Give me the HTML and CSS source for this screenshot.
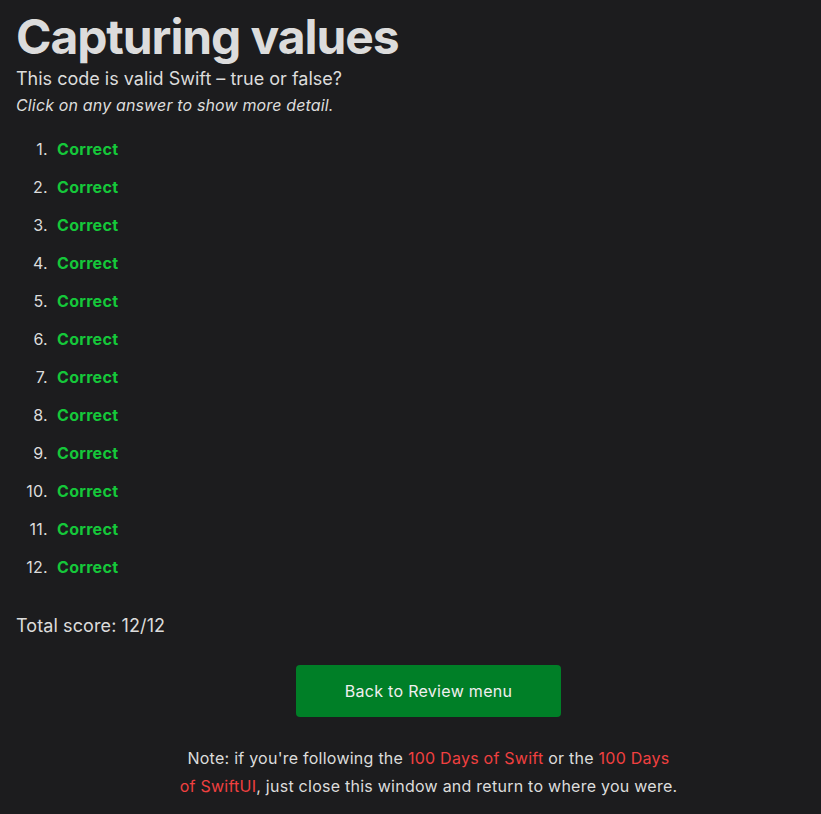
FILE: index.html
```html
<!DOCTYPE html>
<html>
<head>
<meta charset="utf-8">
<link rel="stylesheet" href="styles.css">
</head>
<body>
<main class="page">
  <h1 class="title">Capturing values</h1>
  <p class="subtitle">This code is valid Swift – true or false?</p>
  <p class="hint">Click on any answer to show more detail.</p>
  <ol class="answers">
    <li><span class="correct">Correct</span></li>
    <li><span class="correct">Correct</span></li>
    <li><span class="correct">Correct</span></li>
    <li><span class="correct">Correct</span></li>
    <li><span class="correct">Correct</span></li>
    <li><span class="correct">Correct</span></li>
    <li><span class="correct">Correct</span></li>
    <li><span class="correct">Correct</span></li>
    <li><span class="correct">Correct</span></li>
    <li><span class="correct">Correct</span></li>
    <li><span class="correct">Correct</span></li>
    <li><span class="correct">Correct</span></li>
  </ol>
  <p class="score">Total score: 12/12</p>
  <div class="actions">
    <a class="button" href="#">Back to Review menu</a>
    <p class="note">Note: if you're following the <a href="#">100 Days of Swift</a> or the <a href="#">100 Days of SwiftUI</a>, just close this window and return to where you were.</p>
  </div>
</main>
</body>
</html>
```
FILE: styles.css
```css
html, body {
  margin: 0;
  padding: 0;
  background: #1c1c1e;
}
body {
  font-family: Inter, "Noto Sans", sans-serif;
  color: #dcdcdc;
}
.page {
  padding: 8px 16px 0 16px;
}
.title {
  margin: 0;
  font-size: 48px;
  font-weight: 700;
  line-height: 58px;
  letter-spacing: -1.1px;
}
.subtitle {
  margin: 0;
  font-size: 18px;
  line-height: 26px;
}
.hint {
  margin: 2px 0 0 0;
  font-size: 16px;
  font-style: italic;
  line-height: 22px;
  letter-spacing: 0.15px;
}
.answers {
  margin: 22px 0 0 0;
  padding: 0;
  list-style: none;
  counter-reset: answer;
  font-size: 16px;
}
.answers li {
  display: flex;
  line-height: 22px;
  margin-bottom: 16px;
  counter-increment: answer;
}
.answers li::before {
  content: counter(answer) ".";
  width: 32px;
  margin-right: 9px;
  text-align: right;
  color: #dcdcdc;
  letter-spacing: 0.3px;
}
.correct {
  color: #15c83a;
  font-weight: 700;
  letter-spacing: 0.3px;
}
.score {
  margin: 35px 0 0 0;
  font-size: 18px;
  line-height: 26px;
  letter-spacing: 0.1px;
}
.actions {
  padding-left: 36px;
  display: flex;
  flex-direction: column;
  align-items: center;
  margin-top: 26px;
}
.button {
  display: block;
  width: 265px;
  height: 52px;
  line-height: 52px;
  text-align: center;
  background: #007f27;
  color: #f0f0f0;
  text-decoration: none;
  border-radius: 4px;
  font-size: 16px;
  letter-spacing: 0.3px;
}
.note {
  margin: 27px 0 0 0;
  max-width: 500px;
  text-align: center;
  font-size: 16px;
  line-height: 28px;
  letter-spacing: 0.25px;
}
.note a {
  color: #f04040;
  text-decoration: none;
}
```
